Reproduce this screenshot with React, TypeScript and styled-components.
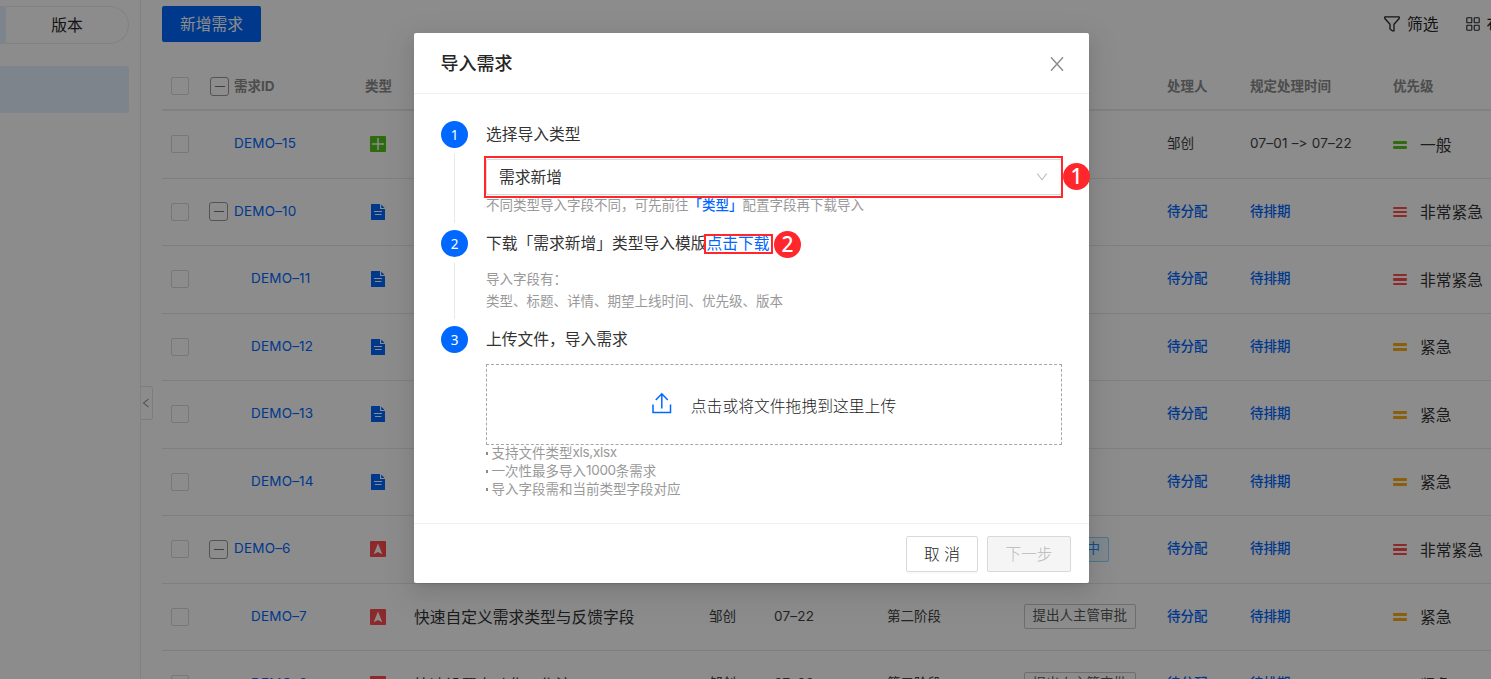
import styled, { createGlobalStyle } from "styled-components";
import { AiOutlineDown, AiOutlineLeft } from "react-icons/ai";

type Kind = "add" | "doc" | "bug";
type Level = "normal" | "high" | "urgent";

interface Demand {
  id: string;
  kind: Kind;
  level: Level;
  child?: boolean;
  expandable?: boolean;
  title?: string;
  author?: string;
  date?: string;
  version?: string;
  status?: string;
  tone?: string;
  handler?: string;
  period?: string;
}

const demands: Demand[] = [
  {
    id: "DEMO–15",
    kind: "add",
    level: "normal",
    status: "已完成",
    tone: "green",
    handler: "邹创",
    period: "07–01 –> 07–22",
  },
  { id: "DEMO–10", kind: "doc", level: "urgent", expandable: true },
  { id: "DEMO–11", kind: "doc", level: "urgent", child: true },
  { id: "DEMO–12", kind: "doc", level: "high", child: true },
  { id: "DEMO–13", kind: "doc", level: "high", child: true },
  { id: "DEMO–14", kind: "doc", level: "high", child: true },
  {
    id: "DEMO–6",
    kind: "bug",
    level: "urgent",
    expandable: true,
    status: "需求处理中",
    tone: "blue",
  },
  {
    id: "DEMO–7",
    kind: "bug",
    level: "high",
    child: true,
    title: "快速自定义需求类型与反馈字段",
    author: "邹创",
    date: "07–22",
    version: "第二阶段",
    status: "提出人主管审批",
    tone: "gray",
  },
  {
    id: "DEMO–8",
    kind: "bug",
    level: "high",
    child: true,
    title: "快速设置自动化工作流",
    author: "邹创",
    date: "07–22",
    version: "第二阶段",
    status: "提出人主管审批",
    tone: "gray",
  },
];

const levels = {
  normal: { label: "一般", color: "#52c41a", bars: 2 },
  high: { label: "紧急", color: "#faad14", bars: 2 },
  urgent: { label: "非常紧急", color: "#ff4d4f", bars: 3 },
};

const tones: { [key: string]: { color: string; border: string; bg: string } } = {
  green: { color: "#52c41a", border: "#95de64", bg: "#f6ffed" },
  blue: { color: "#1890ff", border: "#91d5ff", bg: "#e6f7ff" },
  gray: { color: "#595959", border: "#c8c8c8", bg: "transparent" },
};

const GlobalStyle = createGlobalStyle`
  * {
    box-sizing: border-box;
  }

  body {
    margin: 0;
    overflow: hidden;
    background: #fff;
    color: #262626;
    font-family: Inter, "Noto Sans CJK SC", sans-serif;
    font-size: 13.5px;
    font-feature-settings: "calt" 0;
  }

  svg {
    flex: none;
  }
`;

const Page = styled.div`
  display: flex;
  width: 1491px;
  height: 679px;
  overflow: hidden;
`;

const Sidebar = styled.aside`
  width: 141px;
  flex: none;
  border-right: 1px solid #ebebeb;
  padding-top: 6px;
`;

const Tabs = styled.div`
  display: flex;
  width: 129px;
  height: 38px;
  font-size: 15.75px;
`;

const ActiveTab = styled.div`
  width: 6px;
  background: #e3f0ff;
`;

const Tab = styled.div`
  display: flex;
  flex: 1;
  align-items: center;
  justify-content: center;
  padding-bottom: 2px;
  border: 1px solid #ebebeb;
  border-left: 0;
  border-radius: 0 19px 19px 0;
`;

const ActiveItem = styled.div`
  width: 129px;
  height: 47px;
  margin-top: 22px;
  border-radius: 0 4px 4px 0;
  background: #e3f0ff;
`;

const Rail = styled.div`
  display: flex;
  align-items: center;
  width: 21px;
  flex: none;
  padding-top: 127px;
`;

const Collapse = styled.div`
  display: flex;
  align-items: center;
  justify-content: center;
  width: 12px;
  height: 34px;
  padding-right: 2px;
  border: 1px solid #e4e4e4;
  border-left: 0;
  border-radius: 0 3px 3px 0;
  color: #8c8c8c;
`;

const Main = styled.main`
  flex: 1;
  min-width: 0;
`;

const Toolbar = styled.div`
  display: flex;
  align-items: flex-start;
  justify-content: space-between;
  height: 62px;
  padding-top: 6px;
`;

const AddButton = styled.button`
  width: 99px;
  height: 36px;
  padding: 0 0 2px;
  border: 0;
  border-radius: 2px;
  background: #0068ff;
  color: #fff;
  font-family: inherit;
  font-size: 15.75px;
`;

const Tools = styled.div`
  display: flex;
  align-items: center;
  width: 107px;
  height: 36px;
  padding-bottom: 1px;
  overflow: hidden;
  white-space: nowrap;
  font-size: 15.75px;
`;

const ToolLabel = styled.span<{ $gap: number }>`
  margin-left: 7px;
  margin-right: ${(props) => props.$gap}px;
`;

const Row = styled.div`
  display: grid;
  grid-template-columns: 47px 156px 49px 295px 65px 113px 137px 143px 83px 143px 98px;
  align-items: center;
  height: 67.5px;
  padding-bottom: 1px;
  border-bottom: 1px solid #e8e8e8;
  white-space: nowrap;
`;

const HeadRow = styled(Row)`
  height: 49.25px;
  padding: 1px 0 0;
  border-bottom: 2px solid #ececec;
  color: #8c8c8c;
  font-weight: 700;
`;

const HeadCell = styled.span`
  transform: translateY(-1px);
`;

const Checkbox = styled.span`
  display: block;
  width: 18px;
  height: 18px;
  margin-left: 9px;
  border: 1px solid #d9d9d9;
  border-radius: 2px;
`;

const IdCell = styled.div<{ $indent: number }>`
  display: flex;
  align-items: center;
  padding-left: ${(props) => props.$indent}px;
`;

const Expander = styled.span`
  display: flex;
  align-items: center;
  justify-content: center;
  width: 19px;
  height: 19px;
  margin-right: 6px;
  border: 1.5px solid #999;
  border-radius: 3px;

  &::after {
    content: "";
    width: 10px;
    height: 1px;
    background: #737373;
  }
`;

const HeadExpander = styled(Expander)`
  margin: 0 5px 0 1px;
`;

const Id = styled.span`
  color: #0068ff;
  letter-spacing: 0.2px;
  transform: translateY(-1.5px);
`;

const Small = styled.span<{ $link?: boolean }>`
  color: ${(props) => (props.$link ? "#0068ff" : "#434343")};
  font-weight: ${(props) => (props.$link ? 500 : 400)};
  transform: translateY(-2px);
`;

const DateText = styled(Small)`
  letter-spacing: 0.2px;
  transform: translateY(-1px);
`;

const KindCell = styled.span`
  display: flex;
  padding-left: 5px;
`;

const Title = styled.span`
  color: #333;
  font-size: 15.75px;
`;

const Status = styled.span<{ $tone: string }>`
  justify-self: start;
  height: 25px;
  padding: 0 7.5px;
  border: 1px solid ${(props) => tones[props.$tone].border};
  border-radius: 2px;
  background: ${(props) => tones[props.$tone].bg};
  color: ${(props) => tones[props.$tone].color};
  line-height: 21px;
`;

const Priority = styled.span`
  display: flex;
  align-items: center;
  color: #333;
  font-size: 15.75px;
`;

const Bars = styled.span<{ $color: string; $count: number }>`
  display: flex;
  flex-direction: column;
  justify-content: space-between;
  width: 14px;
  height: ${(props) => (props.$count === 3 ? 11 : 8)}px;
  margin: 1px 13px 0 0;

  i {
    height: ${(props) => (props.$count === 3 ? 2.3 : 3)}px;
    border-radius: 1px;
    background: ${(props) => props.$color};
  }
`;

const Mask = styled.div`
  position: absolute;
  inset: 0;
  display: flex;
  align-items: flex-start;
  justify-content: center;
  padding: 33px 0 0 12px;
  background: rgba(0, 0, 0, 0.45);
`;

const Modal = styled.section`
  display: flex;
  flex-direction: column;
  width: 675px;
  height: 550px;
  border-radius: 2px;
  background: #fff;
  box-shadow: 0 3px 7px -4px rgba(0, 0, 0, 0.12), 0 7px 18px rgba(0, 0, 0, 0.08),
    0 10px 31px 9px rgba(0, 0, 0, 0.05);
`;

const ModalHeader = styled.header`
  display: flex;
  align-items: center;
  justify-content: space-between;
  height: 61px;
  padding: 1px 25px 0 26.5px;
  border-bottom: 1px solid #f0f0f0;
  font-size: 18px;
  font-weight: 500;
`;

const ModalTitle = styled.span`
  padding-bottom: 3px;
`;

const ModalBody = styled.div`
  flex: 1;
  padding: 27px 27px 0;
`;

const Step = styled.div<{ $height: number }>`
  display: flex;
  height: ${(props) => props.$height}px;
`;

const Marker = styled.div`
  display: flex;
  flex-direction: column;
  align-items: center;
  width: 27px;
  margin-right: 18px;
`;

const Dot = styled.span`
  display: flex;
  align-items: center;
  justify-content: center;
  width: 27px;
  height: 27px;
  border-radius: 50%;
  background: #0068ff;
  color: #fff;
  font-family: "Noto Sans", sans-serif;
  font-size: 13.5px;
`;

const Tail = styled.span`
  flex: 1;
  width: 1px;
  margin: 6px 0 7px;
  background: #e8e8e8;
`;

const Content = styled.div`
  flex: 1;
`;

const StepTitle = styled.div`
  display: flex;
  height: 27px;
  color: #333;
  font-size: 15.75px;
  line-height: 28px;
`;

const Select = styled.div`
  position: relative;
  display: flex;
  align-items: center;
  justify-content: space-between;
  height: 36px;
  margin-top: 11px;
  padding: 0 12px 2px;
  border: 1px solid #d9d9d9;
  border-radius: 2px;
  color: #333;
  font-size: 15.75px;

  svg {
    margin-top: 2px;
    color: #bfbfbf;
  }
`;

const Hint = styled.div`
  color: #999;
  line-height: 20px;
`;

const HintLink = styled.span`
  color: #0068ff;
  font-weight: 500;
`;

const Fields = styled.div`
  margin-top: 11px;
  color: #999;
  line-height: 22px;
`;

const Download = styled.span`
  position: relative;
  color: #0068ff;
`;

const SelectFrame = styled.span`
  position: absolute;
  inset: -4px -2px -4px -3px;
  border: 2px solid #ff262c;
`;

const LinkFrame = styled.span`
  position: absolute;
  top: 4px;
  left: -2.5px;
  width: 69px;
  height: 20px;
  border: 2px solid #ff262c;
`;

const Badge = styled.span<{ $x: number; $y: number }>`
  position: absolute;
  top: ${(props) => props.$y}px;
  left: calc(100% + ${(props) => props.$x}px);
  display: flex;
  align-items: center;
  justify-content: center;
  width: 27px;
  height: 27px;
  border-radius: 50%;
  background: #ff262c;
  color: #fff;
  font-family: "Noto Sans", sans-serif;
  font-size: 21px;
  font-weight: 500;
  line-height: 27px;
`;

const Upload = styled.div`
  display: flex;
  align-items: center;
  justify-content: center;
  height: 81px;
  margin-top: 11px;
  padding-top: 2px;
  border: 1px dashed #a6a6a6;
  color: #1a1a1a;
  font-size: 15.8px;
  font-weight: 300;

  svg {
    margin: 0 19px 6px 0;
  }
`;

const Notes = styled.div`
  margin-top: -2px;
`;

const Note = styled.div`
  display: flex;
  align-items: center;
  height: 18px;
  color: #999;

  &::before {
    content: "";
    width: 2px;
    height: 3px;
    margin: 3px 3.5px 0 0;
    background: #8c8c8c;
  }
`;

const Latin = styled.span`
  letter-spacing: -0.3px;
`;

const ModalFooter = styled.footer`
  display: flex;
  justify-content: flex-end;
  gap: 9px;
  height: 60px;
  padding: 12px 18px 0 0;
  border-top: 1px solid #f0f0f0;
`;

const Button = styled.button<{ $width: number }>`
  width: ${(props) => props.$width}px;
  height: 36px;
  padding: 0 0 1px;
  border: 1px solid #d9d9d9;
  border-radius: 2px;
  background: #fff;
  box-shadow: 0 2px 0 rgba(0, 0, 0, 0.02);
  color: #1a1a1a;
  font-family: inherit;
  font-size: 15.75px;
  font-weight: 300;

  &:disabled {
    background: #f5f5f5;
    box-shadow: none;
    color: #b8b8b8;
  }
`;

function FilterIcon() {
  return (
    <svg width="16" height="16" viewBox="0 0 16 16" fill="none" stroke="#262626" strokeWidth="1.3">
      <path d="M.8.9h14.4v1.6L10 8.3v6.6H8.6L6 13V8.3L.8 2.5z" strokeLinejoin="round" />
    </svg>
  );
}

function GridIcon() {
  return (
    <svg width="14" height="14" viewBox="0 0 14 14" fill="none" stroke="#262626" strokeWidth="1.1">
      <rect x=".8" y=".8" width="5" height="5" rx=".6" />
      <rect x="8.2" y=".8" width="5" height="5" rx=".6" />
      <rect x=".8" y="8.2" width="5" height="5" rx=".6" />
      <rect x="8.2" y="8.2" width="5" height="5" rx=".6" />
    </svg>
  );
}

function CloseIcon() {
  return (
    <svg width="14" height="14" viewBox="0 0 14 14" fill="none" stroke="#8c8c8c" strokeWidth="1.5">
      <path d="M1 .3 13 13.7M13 .3 1 13.7" />
    </svg>
  );
}

function UploadIcon() {
  return (
    <svg width="20" height="22" viewBox="0 0 20 22" fill="none" stroke="#0068ff" strokeWidth="1.5">
      <path d="M1 12.5v8h17.5v-8M9.8 16.5V2M3.8 8l6-6.2 6 6.2" />
    </svg>
  );
}

function KindIcon({ kind }: { kind: Kind }) {
  if (kind === "doc") {
    return (
      <svg width="16" height="16" viewBox="0 0 16 16">
        <path d="M1 .5Q1 0 1.5 0H10v5h5v10.5q0 .5-.5.5h-13Q1 16 1 15.5z" fill="#0068ff" />
        <path d="M11.2.6 14.5 4h-3.3z" fill="#0068ff" />
        <path d="M4 7.5h8M5 10.5h6.5" stroke="#fff" />
      </svg>
    );
  }
  return (
    <svg width="16" height="16" viewBox="0 0 16 16">
      <rect width="16" height="16" rx="1" fill={kind === "add" ? "#52c41a" : "#ff4d4f"} />
      {kind === "add" ? (
        <path d="M2 8h12M8 2v12" stroke="#fff" strokeWidth="1.5" />
      ) : (
        <path d="M8 2.5 12.3 13.3 8 11l-4.3 2.3z" fill="#fff" />
      )}
    </svg>
  );
}

function DemandRow({ demand }: { demand: Demand }) {
  const level = levels[demand.level];
  const indent = demand.child ? 42 : demand.expandable ? 0 : 25;

  return (
    <Row>
      <Checkbox />
      <IdCell $indent={indent}>
        {demand.expandable && <Expander />}
        <Id>{demand.id}</Id>
      </IdCell>
      <KindCell>
        <KindIcon kind={demand.kind} />
      </KindCell>
      <Title>{demand.title}</Title>
      <Small>{demand.author}</Small>
      <DateText>{demand.date}</DateText>
      <Small>{demand.version}</Small>
      {demand.status && demand.tone ? (
        <Status $tone={demand.tone}>{demand.status}</Status>
      ) : (
        <span />
      )}
      <Small $link={!demand.handler}>{demand.handler || "待分配"}</Small>
      {demand.period ? <DateText>{demand.period}</DateText> : <Small $link>待排期</Small>}
      <Priority>
        <Bars $color={level.color} $count={level.bars}>
          {Array.from({ length: level.bars }, (_, i) => (
            <i key={i} />
          ))}
        </Bars>
        {level.label}
      </Priority>
    </Row>
  );
}

function ImportModal() {
  return (
    <Modal>
      <ModalHeader>
        <ModalTitle>导入需求</ModalTitle>
        <CloseIcon />
      </ModalHeader>
      <ModalBody>
        <Step $height={109}>
          <Marker>
            <Dot>1</Dot>
            <Tail />
          </Marker>
          <Content>
            <StepTitle>选择导入类型</StepTitle>
            <Select>
              需求新增
              <AiOutlineDown size={14} />
              <SelectFrame />
              <Badge $x={2} $y={3}>
                1
              </Badge>
            </Select>
            <Hint>
              不同类型导入字段不同，可先前往<HintLink>「类型」</HintLink>配置字段再下载导入
            </Hint>
          </Content>
        </Step>
        <Step $height={96}>
          <Marker>
            <Dot>2</Dot>
            <Tail />
          </Marker>
          <Content>
            <StepTitle>
              下载「需求新增」类型导入模版
              <Download>
                点击下载
                <LinkFrame />
                <Badge $x={4.5} $y={1}>
                  2
                </Badge>
              </Download>
            </StepTitle>
            <Fields>
              导入字段有：
              <br />
              类型、标题、详情、期望上线时间、优先级、版本
            </Fields>
          </Content>
        </Step>
        <Step $height={170}>
          <Marker>
            <Dot>3</Dot>
          </Marker>
          <Content>
            <StepTitle>上传文件，导入需求</StepTitle>
            <Upload>
              <UploadIcon />
              点击或将文件拖拽到这里上传
            </Upload>
            <Notes>
              <Note>
                支持文件类型<Latin>xls,xlsx</Latin>
              </Note>
              <Note>
                一次性最多导入<Latin>1000</Latin>条需求
              </Note>
              <Note>导入字段需和当前类型字段对应</Note>
            </Notes>
          </Content>
        </Step>
      </ModalBody>
      <ModalFooter>
        <Button $width={72}>取 消</Button>
        <Button $width={84} disabled>
          下一步
        </Button>
      </ModalFooter>
    </Modal>
  );
}

function App() {
  return (
    <>
      <GlobalStyle />
      <Page>
        <Sidebar>
          <Tabs>
            <ActiveTab />
            <Tab>版本</Tab>
          </Tabs>
          <ActiveItem />
        </Sidebar>
        <Rail>
          <Collapse>
            <AiOutlineLeft size={12} />
          </Collapse>
        </Rail>
        <Main>
          <Toolbar>
            <AddButton>新增需求</AddButton>
            <Tools>
              <FilterIcon />
              <ToolLabel $gap={27}>筛选</ToolLabel>
              <GridIcon />
              <ToolLabel $gap={0}>布局</ToolLabel>
            </Tools>
          </Toolbar>
          <HeadRow>
            <Checkbox />
            <IdCell $indent={0}>
              <HeadExpander />
              <HeadCell>需求ID</HeadCell>
            </IdCell>
            <HeadCell>类型</HeadCell>
            <HeadCell>标题</HeadCell>
            <HeadCell>提出人</HeadCell>
            <HeadCell>提出时间</HeadCell>
            <HeadCell>版本</HeadCell>
            <HeadCell>状态</HeadCell>
            <HeadCell>处理人</HeadCell>
            <HeadCell>规定处理时间</HeadCell>
            <HeadCell>优先级</HeadCell>
          </HeadRow>
          {demands.map((demand) => (
            <DemandRow key={demand.id} demand={demand} />
          ))}
        </Main>
      </Page>
      <Mask>
        <ImportModal />
      </Mask>
    </>
  );
}

export default App;
